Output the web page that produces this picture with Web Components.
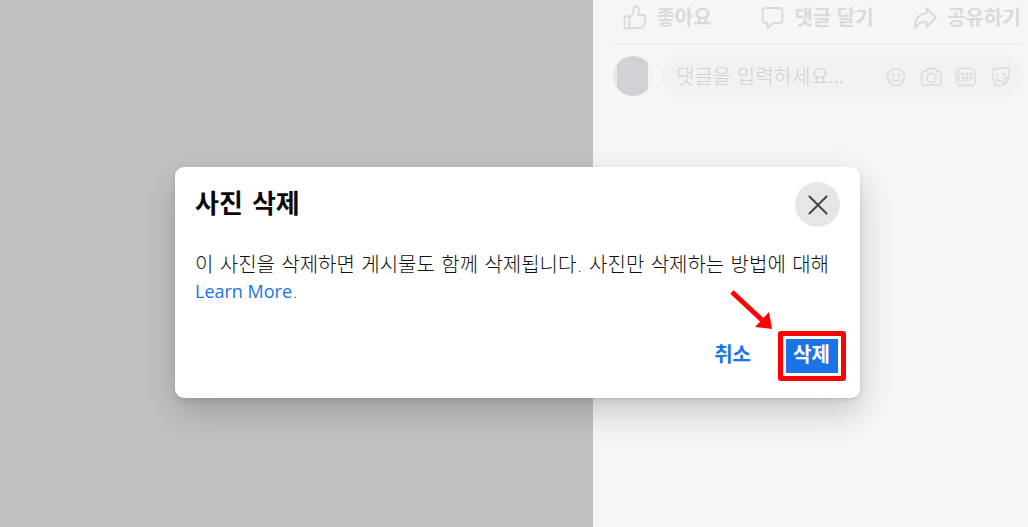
<!DOCTYPE html>
<html lang="ko">
<head>
<meta charset="utf-8">
<title>사진 삭제</title>
<style>
  body { margin: 0; font-family: "DejaVu Sans", "Noto Sans CJK KR", sans-serif; }
</style>
</head>
<body>
<photo-page>
  <post-actions slot="side">
    <post-action icon="like">좋아요</post-action>
    <post-action icon="comment">댓글 달기</post-action>
    <post-action icon="share">공유하기</post-action>
  </post-actions>
  <comment-composer slot="side"></comment-composer>
  <confirm-dialog slot="dialog">
    <span slot="title">사진 삭제</span>
    이 사진을 삭제하면 게시물도 함께 삭제됩니다. 사진만 삭제하는 방법에 대해 <text-link>Learn More</text-link>.
  </confirm-dialog>
</photo-page>

<script>
class BaseElement extends HTMLElement {
  constructor() {
    super();
    this.attachShadow({ mode: 'open' }).innerHTML = this.template();
  }
}

customElements.define('photo-page', class extends BaseElement {
  template() {
    return `<style>
      :host { display: grid; grid-template-columns: minmax(0, 1fr) 435px; min-height: 100vh; position: relative; overflow: hidden; }
      .photo { background: #c2c2c2; }
      aside { background: #f6f6f6; padding: 0 5px 0 20px; box-sizing: border-box; }
      .overlay { position: absolute; inset: 0; display: flex; justify-content: center; align-items: flex-start; padding: 167px 0 0 7px; }
    </style>
    <main class="photo"></main>
    <aside><slot name="side"></slot></aside>
    <div class="overlay"><slot name="dialog"></slot></div>`;
  }
});

customElements.define('post-actions', class extends BaseElement {
  template() {
    return `<style>
      :host { display: block; height: 43px; border-bottom: 1px solid #ebebeb; }
      .row { display: grid; grid-template-columns: repeat(3, 1fr); justify-items: center; margin: 0 -19px 0 -21px; }
    </style><div class="row"><slot></slot></div>`;
  }
});

const ACTION_ICONS = {
  like: '<path d="M2.5 11.5h5v12h-5zM7.5 12.5l4-4.500V3.500q0-2 2-2 3.500 0 3.500 4.500l-1 4h5q2.500 0 2.500 2.500 0 1.500-.5 4l-1.500 4.500q-.7 2-3 2H7.500"/>',
  comment: '<path d="M6 3h13q3.500 0 3.500 3v9q0 3-3.500 3h-6l-5.500 5.500V18H6q-3.500 0-3.500-3V6q0-3 3.500-3z"/>',
  share: '<path d="M13.500 3v5.500C6 9 2 14 2 23c3-5 6-6.500 11.500-6.500V22l9.500-9.500z"/>'
};

customElements.define('post-action', class extends BaseElement {
  template() {
    return `<style>
      :host { display: block; }
      button { display: flex; align-items: center; gap: 9px; height: 34px; border: 0; padding: 0; background: none; color: #d9dadb; font: 700 20px/28px "Noto Sans CJK KR", sans-serif; white-space: nowrap; }
      svg { width: 25px; height: 25px; fill: none; stroke: #d9dadb; stroke-width: 1.800; stroke-linejoin: round; }
    </style>
    <button type="button"><svg viewBox="0 0 25 25" aria-hidden="true">${ACTION_ICONS[this.getAttribute('icon')]}</svg><slot></slot></button>`;
  }
});

customElements.define('comment-composer', class extends BaseElement {
  template() {
    return `<style>
      :host { display: flex; align-items: center; gap: 8px; padding-top: 10px; }
      .avatar { flex: none; width: 40px; height: 40px; border-radius: 50%; background: linear-gradient(90deg, #e6e7e9 4px, #d1d2d6 4px 35px, #f2f2f3 35px); }
      .field { flex: 1; min-width: 0; display: flex; align-items: center; gap: 11px; height: 44px; padding: 0 10px 0 15px; border-radius: 22px; background: #f2f2f2; }
      input { flex: 1; min-width: 0; height: 28px; padding: 0; border: 0; outline: 0; background: none; font: 300 20px/28px "Noto Sans CJK KR", sans-serif; }
      input::placeholder { color: #cfd0d1; opacity: 1; }
      button { flex: none; display: block; border: 0; padding: 0; width: 24px; height: 24px; background: none; }
      svg { display: block; width: 24px; height: 24px; fill: none; stroke: #d9dadb; stroke-width: 1.5; stroke-linejoin: round; stroke-linecap: round; }
      .dot { fill: #d9dadb; stroke: none; }
    </style>
    <div class="avatar"></div>
    <div class="field">
      <input type="text" aria-label="댓글" placeholder="댓글을 입력하세요...">
      <button type="button" aria-label="이모티콘"><svg viewBox="0 0 24 24"><circle cx="12" cy="13" r="8.500"/><path d="M8 15.500q4 4 8 0"/><circle class="dot" cx="9" cy="11" r="1.200"/><circle class="dot" cx="15" cy="11" r="1.200"/></svg></button>
      <button type="button" aria-label="사진"><svg viewBox="0 0 24 24"><path d="M5 7.500h2L9 4.500h7l2 3h1.500q2.500 0 2.500 2.500v8.500q0 2.500-2.500 2.500h-15Q2.500 21 2.500 18.500V10Q2.500 7.500 5 7.500z"/><circle cx="12.500" cy="14" r="4.500"/><circle class="dot" cx="18.500" cy="10" r="1"/></svg></button>
      <button type="button" aria-label="GIF"><svg viewBox="0 0 24 24"><rect x="2.500" y="4.500" width="19" height="17" rx="4.500"/><path d="M10 10q-5-2-5.500 3t5.500 3.500V13.500H8M13 9v8M16 17V9.500h4M16 13.500h3.500"/></svg></button>
      <button type="button" aria-label="스티커"><svg viewBox="0 0 24 24"><path d="M5.500 5l12-1.500q3-.5 3 2.500 0 4-1 8.500-2 5-6 6.500-2 1-4 1-3 0-4-3L3 8.500Q2.500 5.500 5.500 5zM20 13q-4 .5-5 3.500-.5 2-1 4.500"/><path d="M8 15.500q1.500 2.500 4 1.500"/><circle class="dot" cx="8" cy="11" r="1.200"/><circle class="dot" cx="15" cy="10" r="1.200"/></svg></button>
    </div>`;
  }
});

customElements.define('text-link', class extends BaseElement {
  template() {
    return `<style>
      :host { display: inline; }
      a { color: #1b74e4; text-decoration: none; font: 400 18px/26px "Open Sans", sans-serif; }
    </style><a href="#"><slot></slot></a>`;
  }
});

customElements.define('confirm-dialog', class extends BaseElement {
  template() {
    return `<style>
      :host { display: block; position: relative; box-sizing: border-box; width: 685px; max-width: 100%; padding: 15px 14px 17px 20px; background: #fff; border-radius: 9px; box-shadow: 0 14px 35px rgba(0,0,0,.2), 0 2px 5px rgba(0,0,0,.1); }
      header { display: flex; justify-content: space-between; align-items: center; padding-right: 6px; }
      h2 { margin: 0; padding-bottom: 2px; font: 700 26px/38px "DejaVu Sans", "Noto Sans CJK KR", sans-serif; color: #080809; }
      .close { width: 45px; height: 45px; border: 0; border-radius: 50%; padding: 0; background: #e4e6e8; display: grid; place-items: center; }
      .close svg { width: 20px; height: 20px; stroke: #444648; stroke-width: 2; stroke-linecap: round; }
      p { margin: 0; padding-top: 25px; font-weight: 300; font-size: 20px; line-height: 26px; color: #111; }
      footer { display: flex; justify-content: flex-end; align-items: center; gap: 26px; padding-top: 27px; }
      .action { height: 34px; border: 0; padding: 0 1px 4px 0; background: none; color: #1b74e4; font: 700 20px/30px "Noto Sans CJK KR", sans-serif; }
      .primary { display: block; width: 52px; background: #1b74e4; color: #fff; }
      .mark { border: 5px solid #f00; border-radius: 3px; padding: 3px; }
      .arrow { position: absolute; right: 86px; bottom: 67px; width: 44px; height: 42px; }
    </style>
    <header>
      <h2><slot name="title"></slot></h2>
      <button class="close" type="button" aria-label="닫기"><svg viewBox="0 0 20 20"><path d="M1.500 1.500l17 17M18.500 1.500l-17 17"/></svg></button>
    </header>
    <p><slot></slot></p>
    <footer>
      <button class="action" type="button">취소</button>
      <div class="mark"><button class="action primary" type="button">삭제</button></div>
    </footer>
    <svg class="arrow" viewBox="0 0 44 42" aria-hidden="true"><path d="M2 3L32 31" stroke="#f00" stroke-width="5"/><path d="M42 40L25 38 39 23z" fill="#f00"/></svg>`;
  }
});
</script>
</body>
</html>
